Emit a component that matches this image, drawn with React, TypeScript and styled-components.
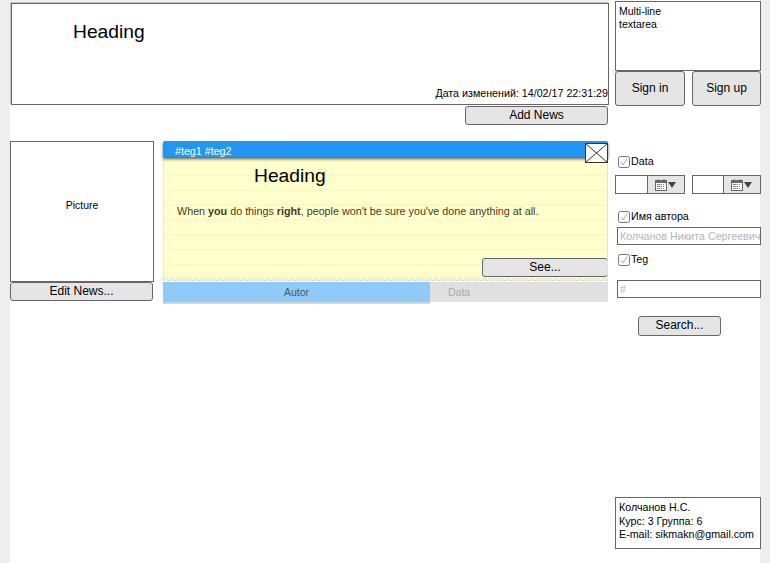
import React from 'react';
import styled, { createGlobalStyle } from 'styled-components';

const GlobalStyle = createGlobalStyle`
  html, body {
    margin: 0;
    padding: 0;
    background: #eeeeee;
  }
  body {
    font-family: "Liberation Sans", Arial, sans-serif;
    color: #000;
  }
`;

const Page = styled.div`
  width: 750px;
  height: 563px;
  margin-left: 10px;
  background: #fff;
  display: grid;
  grid-template-columns: 599px 146px;
  column-gap: 6px;
`;

const Main = styled.div`
  display: flex;
  flex-direction: column;
  border-top: 3px solid #f1f1f1;
`;

const Header = styled.div`
  box-sizing: border-box;
  height: 102px;
  margin-left: 1px;
  border: 1px solid #666;
  box-shadow: -1px -1px 0 #c4c4c4;
  padding: 16px 0 0 61px;
  position: relative;
`;

const Heading = styled.div<{ $indent?: number }>`
  font-size: 19.25px;
  line-height: 24px;
  margin-left: ${(p) => p.$indent || 0}px;
`;

const Modified = styled.div`
  position: absolute;
  right: 0;
  bottom: 4px;
  font-size: 10.7px;
  line-height: 13px;
  white-space: nowrap;
`;

const Button = styled.button<{ $w?: number; $h: number; $size?: number }>`
  box-sizing: border-box;
  display: block;
  width: ${(p) => (p.$w ? `${p.$w}px` : '100%')};
  height: ${(p) => p.$h}px;
  padding: 0 0 2px;
  background: #e5e5e5;
  border: 1px solid #666;
  border-radius: 3px;
  font-family: inherit;
  font-size: ${(p) => p.$size || 12}px;
  color: #000;
  text-align: center;
`;

const AddRow = styled.div`
  display: flex;
  justify-content: flex-end;
  margin: 1px 1px 0 0;
`;

const NewsRow = styled.div`
  display: grid;
  grid-template-columns: 144px 445px;
  column-gap: 9px;
  margin-top: 16px;
`;

const PictureColumn = styled.div`
  display: flex;
  flex-direction: column;
`;

const Picture = styled.div`
  box-sizing: border-box;
  height: 141px;
  border: 1px solid #666;
  padding-bottom: 14px;
  display: flex;
  align-items: center;
  justify-content: center;
  font-size: 10.5px;
`;

const Card = styled.div`
  display: flex;
  flex-direction: column;
`;

const CardBar = styled.div`
  box-sizing: border-box;
  height: 16px;
  background: #2196f3;
  border-radius: 2px 2px 0 0;
  color: #fff;
  font-size: 10.7px;
  line-height: 21px;
  padding-left: 12px;
  box-shadow: 0 2px 3px rgba(70, 70, 50, 0.85);
  position: relative;
  z-index: 1;
`;

const CloseBox = styled.svg`
  position: absolute;
  top: 2px;
  right: 0;
  display: block;
`;

const Note = styled.div`
  box-sizing: border-box;
  height: 124px;
  position: relative;
  background-color: #ffffcc;
  background-image:
    linear-gradient(90deg, transparent 5px, #f7f7c8 5px, #f7f7c8 6px, transparent 6px),
    linear-gradient(180deg, transparent 2px, #f8f8c9 2px, #f8f8c9 4px, transparent 4px);
  background-size: 100% 100%, 100% 15px;
  border-left: 1px solid #e6e6cc;
  border-right: 1px solid #e6e6cc;
  padding: 7px 0 0 13px;
  overflow: hidden;
`;

const Zigzag = styled.svg`
  position: absolute;
  left: -1px;
  bottom: 0;
  display: block;
`;

const NoteText = styled.p`
  margin: 17px 0 0;
  font-size: 10.75px;
  line-height: 13px;
  color: #4a3a1c;
  b {
    font-weight: bold;
  }
`;

const SeeButton = styled(Button)`
  position: absolute;
  right: -1px;
  bottom: 4px;
`;

const Tabs = styled.div`
  display: grid;
  grid-template-columns: 267px 178px;
  height: 18px;
  margin-top: 1px;
`;

const Tab = styled.div<{ $active?: boolean }>`
  background: ${(p) => (p.$active ? '#90caf9' : '#e0e0e0')};
  color: ${(p) => (p.$active ? '#455a64' : '#aaaaaa')};
  box-shadow: ${(p) => (p.$active ? '0 2px 0 #cfd8dc' : 'none')};
  font-size: 10.5px;
  line-height: 20px;
  text-align: ${(p) => (p.$active ? 'center' : 'left')};
  padding-left: ${(p) => (p.$active ? 0 : 18)}px;
`;

const Side = styled.div`
  display: flex;
  flex-direction: column;
  padding-top: 1px;
  height: 562px;
  box-sizing: border-box;
`;

const TextArea = styled.div`
  box-sizing: border-box;
  height: 70px;
  border: 1px solid #666;
  padding: 3px 3px;
  font-size: 10.5px;
  line-height: 13px;
`;

const SignRow = styled.div`
  display: flex;
  justify-content: space-between;
`;

const Filters = styled.div`
  display: flex;
  flex-direction: column;
  align-items: flex-start;
  margin-top: 49px;
`;

const CheckRow = styled.label<{ $top?: number }>`
  display: flex;
  align-items: center;
  gap: 1px;
  margin: ${(p) => p.$top || 0}px 0 0 3px;
  font-size: 10.7px;
  line-height: 13px;
`;

const Check = styled.svg`
  display: block;
`;

const DateRow = styled.div`
  display: flex;
  justify-content: space-between;
  width: 146px;
  margin-top: 7px;
`;

const DateField = styled.div<{ $w: number; $input: number }>`
  box-sizing: border-box;
  width: ${(p) => p.$w}px;
  height: 19px;
  display: grid;
  grid-template-columns: ${(p) => p.$input}px 1fr;
  border: 1px solid #666;
`;

const DatePicker = styled.div`
  background: #e5e5e5;
  border-left: 1px solid #666;
  display: flex;
  align-items: center;
  padding-left: 7px;
  gap: 1px;
`;

const TextField = styled.div<{ $top: number }>`
  box-sizing: border-box;
  width: 144px;
  height: 18px;
  margin: ${(p) => p.$top}px 0 0 2px;
  border: 1px solid #666;
  padding-left: 2px;
  color: #b5b5b5;
  font-size: 10.7px;
  line-height: 16px;
  white-space: nowrap;
  overflow: hidden;
`;

const SearchWrap = styled.div`
  margin: 18px 0 0 23px;
`;

const Contacts = styled.div`
  box-sizing: border-box;
  height: 52px;
  margin-top: auto;
  margin-bottom: 13px;
  border: 1px solid #666;
  padding: 3px 3px;
  font-size: 10.7px;
  line-height: 13.5px;
  white-space: nowrap;
`;

const CheckIcon = () => (
  <Check width="12" height="12" viewBox="0 0 12 12">
    <rect x="0.5" y="0.5" width="11" height="11" rx="2" fill="#fff" stroke="#777" />
    <path d="M3 6.2 L5 9 L9.2 2.6" fill="none" stroke="#aaa" strokeWidth="1" />
  </Check>
);

const CalendarIcon = () => (
  <svg width="12" height="12" viewBox="0 0 12 12">
    <rect x="0.5" y="1.5" width="11" height="10" fill="#fff" stroke="#666" />
    <rect x="0" y="1" width="12" height="3" fill="#666" />
    <path d="M3 0v2M9 0v2" stroke="#666" />
    <path d="M2 5.5h8M2 7.5h8M2 9.5h8M3.5 5v5.5M6 5v5.5M8.5 5v5.5" stroke="#888" strokeWidth="1" strokeDasharray="1 1" />
  </svg>
);

const ArrowIcon = () => (
  <svg width="8" height="6" viewBox="0 0 8 6">
    <path d="M0 0h8L4 6z" fill="#444" />
  </svg>
);

const DateInput = ({ w, input }: { w: number; input: number }) => (
  <DateField $w={w} $input={input}>
    <div />
    <DatePicker>
      <CalendarIcon />
      <ArrowIcon />
    </DatePicker>
  </DateField>
);

const zigzagPath = () => {
  let d = 'M0 4';
  for (let x = 0; x < 445; x += 6) {
    d += ` L${x + 3} 1 L${x + 6} 4`;
  }
  return d;
};

const App = () => (
  <>
    <GlobalStyle />
    <Page>
      <Main>
        <Header>
          <Heading>Heading</Heading>
          <Modified>Дата изменений: 14/02/17 22:31:29</Modified>
        </Header>
        <AddRow>
          <Button $w={143} $h={19}>Add News</Button>
        </AddRow>
        <NewsRow>
          <PictureColumn>
            <Picture>Picture</Picture>
            <Button $w={143} $h={19}>Edit News...</Button>
          </PictureColumn>
          <Card>
            <CardBar>
              #teg1 #teg2
              <CloseBox width="23" height="20" viewBox="0 0 23 20">
                <rect x="0.5" y="0.5" width="22" height="19" fill="#fff" stroke="#333" />
                <path d="M0.5 0.5L22.5 19.5M22.5 0.5L0.5 19.5" stroke="#333" />
              </CloseBox>
            </CardBar>
            <Note>
              <Heading $indent={77}>Heading</Heading>
              <NoteText>
                When <b>you</b> do things <b>right</b>, people won't be sure you've done anything at all.
              </NoteText>
              <Zigzag width="445" height="4" viewBox="0 0 445 4">
                <path d={`${zigzagPath()} V4 H0 Z`} fill="#fff" stroke="#cfcfbc" strokeWidth="0.8" />
              </Zigzag>
              <SeeButton $w={126} $h={19}>See...</SeeButton>
            </Note>
            <Tabs>
              <Tab $active>Autor</Tab>
              <Tab>Data</Tab>
            </Tabs>
          </Card>
        </NewsRow>
      </Main>
      <Side>
        <TextArea>
          Multi-line
          <br />
          textarea
        </TextArea>
        <SignRow>
          <Button $w={70} $h={35}>Sign in</Button>
          <Button $w={69} $h={35}>Sign up</Button>
        </SignRow>
        <Filters>
          <CheckRow>
            <CheckIcon />
            Data
          </CheckRow>
          <DateRow>
            <DateInput w={70} input={31} />
            <DateInput w={69} input={30} />
          </DateRow>
          <CheckRow $top={16}>
            <CheckIcon />
            Имя автора
          </CheckRow>
          <TextField $top={4}>Колчанов Никита Сергеевич</TextField>
          <CheckRow $top={8}>
            <CheckIcon />
            Teg
          </CheckRow>
          <TextField $top={14}>#</TextField>
          <SearchWrap>
            <Button $w={83} $h={20}>Search...</Button>
          </SearchWrap>
        </Filters>
        <Contacts>
          Колчанов Н.С.
          <br />
          Курс: 3 Группа: 6
          <br />
          E-mail: sikmakn@gmail.com
        </Contacts>
      </Side>
    </Page>
  </>
);

export default App;
